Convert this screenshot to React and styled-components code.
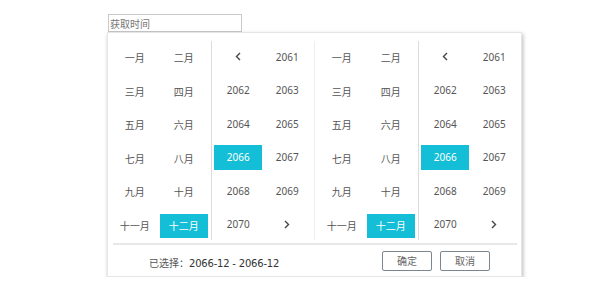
import React from "react"
import styled, { createGlobalStyle } from "styled-components"

const GlobalStyle = createGlobalStyle`
  html, body {
    margin: 0;
    padding: 0;
    background: #fff;
  }
`

const Page = styled.div`
  padding: 14px 0 0 107px;
  font-family: "Noto Sans", "Noto Sans CJK SC", sans-serif;
`

const Picker = styled.div`
  width: 415px;
`

const Input = styled.input`
  display: block;
  box-sizing: border-box;
  width: 134px;
  height: 18px;
  margin: 0 0 0 1px;
  padding: 0 1px;
  border: 1px solid #c9c9c9;
  font-family: "Noto Sans CJK SC", sans-serif;
  font-size: 10px;
  color: #666;
  outline: none;

  &::placeholder {
    color: #777;
  }
`

const Panel = styled.div`
  box-sizing: border-box;
  width: 415px;
  height: 245px;
  border: 1px solid #e6e6e6;
  background: #fff;
  box-shadow: 1px 2px 4px rgba(0, 0, 0, 0.28);
  display: flex;
  flex-direction: column;
`

const Body = styled.div`
  display: flex;
  margin-top: 8px;
  height: 199px;
`

const Pane = styled.div`
  flex: 1;
  display: grid;
  grid-template-columns: 48px 48px;
  grid-auto-rows: ${(p) => (p.$years ? "25px" : "24px")};
  row-gap: ${(p) => (p.$years ? "8.5px" : "9.5px")};
  justify-content: center;
  align-content: start;
  column-gap: 1px;
  padding-top: ${(p) => (p.$years ? "3px" : "5px")};
  border-right: ${(p) =>
    p.$divider === "strong"
      ? "1px solid #dcdcdc"
      : p.$divider === "soft"
      ? "1px solid #efefef"
      : "none"};
`

const Cell = styled.div`
  display: flex;
  align-items: center;
  justify-content: center;
  font-size: 10px;
  line-height: 1;
  color: ${(p) => (p.$active ? "#fff" : "#555")};
  background: ${(p) => (p.$active ? "#14bed6" : "transparent")};
  cursor: pointer;
`

const Separator = styled.div`
  height: 2px;
  margin: 3px 4px 0 5px;
  background: #e8e8e8;
`

const Footer = styled.div`
  flex: 1;
  display: flex;
  align-items: center;
  padding: 0 31px 0 41px;
`

const Selected = styled.div`
  flex: 1;
  margin-top: 3px;
  font-family: "DejaVu Sans", "Noto Sans CJK SC", sans-serif;
  font-size: 10px;
  letter-spacing: -0.2px;
  color: #333;
`

const Label = styled.span`
  font-family: "Noto Sans CJK SC", sans-serif;
  color: #555;
  letter-spacing: 0;
`

const Button = styled.button`
  box-sizing: border-box;
  width: 50px;
  height: 20px;
  margin-left: 8px;
  padding: 0;
  border: 1px solid #7c8690;
  border-radius: 2px;
  background: #fff;
  font-family: "Noto Sans CJK SC", sans-serif;
  font-size: 10px;
  color: #666;
  cursor: pointer;
`

const Chevron = ({ dir }) => (
  <svg width="6" height="9" viewBox="0 0 6 9">
    <path
      d={dir === "left" ? "M5 1 L1.5 4.5 L5 8" : "M1 1 L4.5 4.5 L1 8"}
      fill="none"
      stroke="#444"
      strokeWidth="1.4"
    />
  </svg>
)

const months = ["一月", "二月", "三月", "四月", "五月", "六月", "七月", "八月", "九月", "十月", "十一月", "十二月"]
const years = ["prev", 2061, 2062, 2063, 2064, 2065, 2066, 2067, 2068, 2069, 2070, "next"]

const MonthPane = ({ active }) => (
  <Pane $divider="strong">
    {months.map((m, i) => (
      <Cell key={m} $active={i + 1 === active}>
        {m}
      </Cell>
    ))}
  </Pane>
)

const YearPane = ({ active, divider }) => (
  <Pane $years $divider={divider}>
    {years.map((y) => (
      <Cell key={y} $active={y === active}>
        {y === "prev" ? <Chevron dir="left" /> : y === "next" ? <Chevron dir="right" /> : y}
      </Cell>
    ))}
  </Pane>
)

export default function App() {
  return (
    <Page>
      <GlobalStyle />
      <Picker>
        <Input placeholder="获取时间" readOnly />
        <Panel>
          <Body>
            <MonthPane active={12} />
            <YearPane active={2066} divider="soft" />
            <MonthPane active={12} />
            <YearPane active={2066} />
          </Body>
          <Separator />
          <Footer>
            <Selected>
              <Label>已选择：</Label>2066-12 - 2066-12
            </Selected>
            <Button>确定</Button>
            <Button>取消</Button>
          </Footer>
        </Panel>
      </Picker>
    </Page>
  )
}
